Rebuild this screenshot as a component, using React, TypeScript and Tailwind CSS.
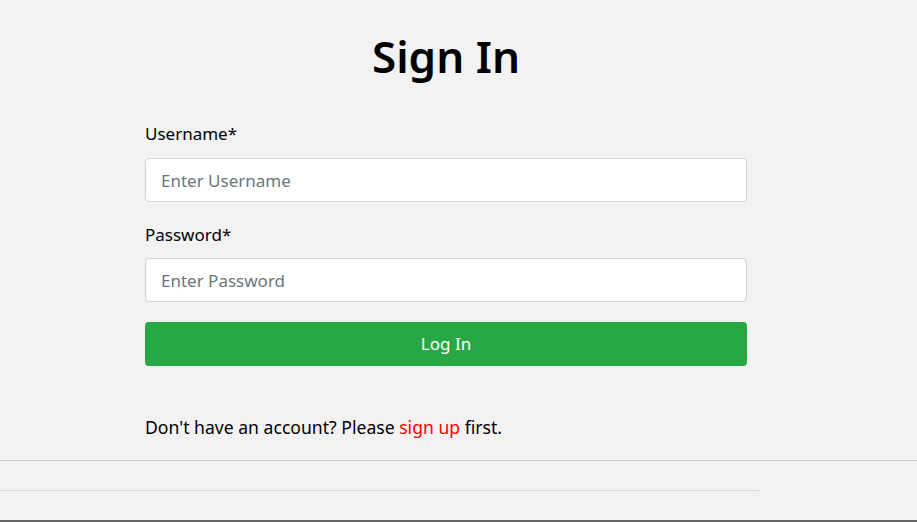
export default function App() {
  return (
    <div
      className="h-[522px] w-[917px] overflow-hidden bg-[#f2f2f2] text-black"
      style={{ fontFamily: '"Noto Sans", "Open Sans", sans-serif' }}
    >
      <div className="ml-[145px] w-[602px] pt-[26px]">
        <h1 className="text-center text-[44px] font-semibold leading-[60px]">Sign In</h1>

        <form className="mt-[36px] flex flex-col">
          <label className="text-[17px] leading-[24px]">Username*</label>
          <input
            className="mt-[12px] h-[44px] rounded-[4px] border border-[#ced4da] bg-white px-[15px] text-[17px] placeholder:text-[#6c757d] outline-none"
            placeholder="Enter Username"
          />
          <label className="mt-[21px] text-[17px] leading-[24px]">Password*</label>
          <input
            type="password"
            className="mt-[11px] h-[44px] rounded-[4px] border border-[#ced4da] bg-white px-[15px] text-[17px] placeholder:text-[#6c757d] outline-none"
            placeholder="Enter Password"
          />
          <button
            type="button"
            className="mt-[20px] h-[44px] rounded-[4px] bg-[#28a745] text-[17px] text-white"
          >
            Log In
          </button>
        </form>

        <p className="mt-[49px] text-[17.6px] leading-[24px]">
          Don't have an account? Please <a className="text-[#ff0000]">sign up</a> first.
        </p>
      </div>

      <div className="mt-[21px] h-px w-full bg-[#cccccc]" />
      <div className="mt-[29px] h-px w-[759px] bg-[#d6d6d6]" />
      <div className="mt-[29px] h-[2px] w-full bg-[#666666]" />
    </div>
  );
}
